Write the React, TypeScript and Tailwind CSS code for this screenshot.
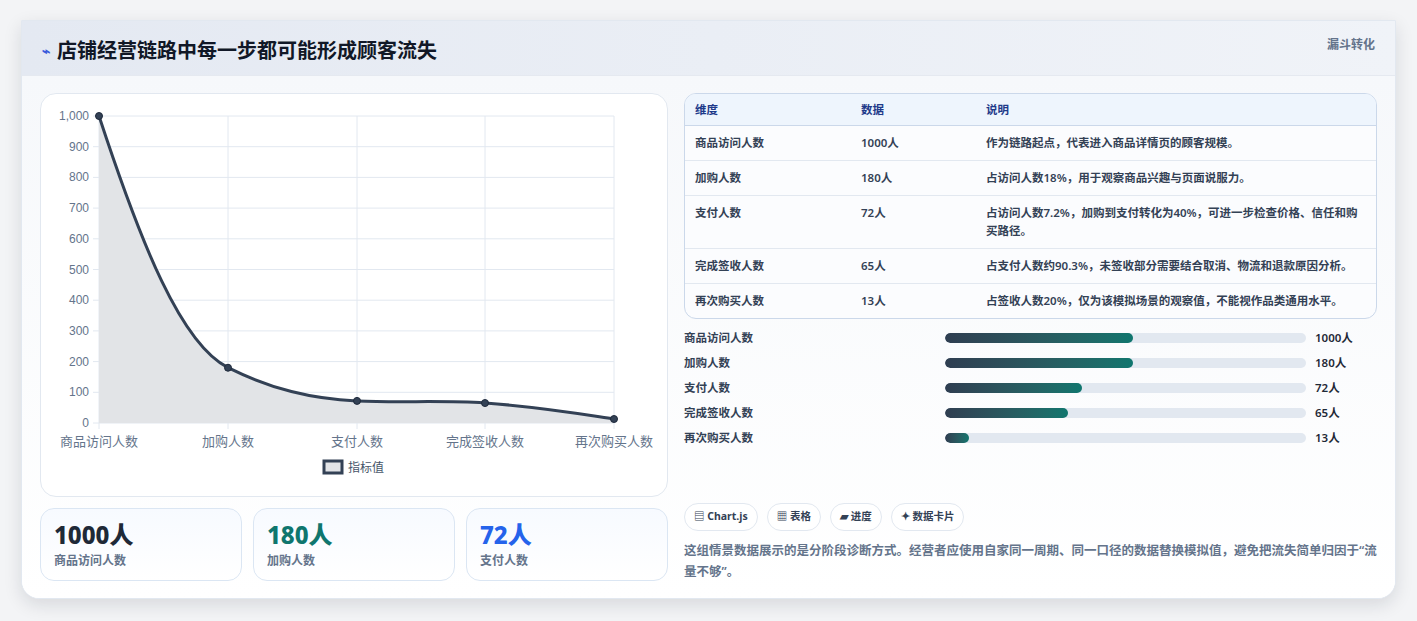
import React from "react";

const rows = [
  ["商品访问人数", "1000人", "作为链路起点，代表进入商品详情页的顾客规模。"],
  ["加购人数", "180人", "占访问人数18%，用于观察商品兴趣与页面说服力。"],
  ["支付人数", "72人", "占访问人数7.2%，加购到支付转化为40%，可进一步检查价格、信任和购买路径。"],
  ["完成签收人数", "65人", "占支付人数约90.3%，未签收部分需要结合取消、物流和退款原因分析。"],
  ["再次购买人数", "13人", "占签收人数20%，仅为该模拟场景的观察值，不能视作品类通用水平。"],
];
const bars = [
  ["商品访问人数", 52, "1000人"],
  ["加购人数", 52, "180人"],
  ["支付人数", 38, "72人"],
  ["完成签收人数", 34, "65人"],
  ["再次购买人数", 6.6, "13人"],
] as const;

function Chart() {
  const xs = [58, 187, 316, 444, 573];
  const y = (v: number) => 329 - v * 0.307;
  const vals = [1000, 180, 72, 65, 13];
  const cats = ["商品访问人数", "加购人数", "支付人数", "完成签收人数", "再次购买人数"];
  const line =
    "M58,22 C100,150 140,250 187,273.7 C230,295 270,305 316,306.9 C360,309 400,306 444,309 C500,313 540,320 573,325";
  return (
    <svg width="627" height="401" className="block" style={{ fontFamily: "'Liberation Sans','Noto Sans CJK SC',sans-serif" }}>
      {[0, 1, 2, 3, 4, 5, 6, 7, 8, 9, 10].map((i) => (
        <g key={i}>
          <line x1={52} x2={573} y1={y(i * 100)} y2={y(i * 100)} stroke="#e2e8f0" />
          <text x={48} y={y(i * 100) + 4} textAnchor="end" fontSize="12" fill="#64748b">
            {i === 10 ? "1,000" : i * 100}
          </text>
        </g>
      ))}
      {xs.map((x, i) => (
        <g key={i}>
          <line x1={x} x2={x} y1={22} y2={335} stroke="#e2e8f0" />
          <text x={x} y={352} textAnchor="middle" fontSize="13" fill="#64748b">{cats[i]}</text>
        </g>
      ))}
      <path d={line + " L573,329 L58,329 Z"} fill="#e2e4e7" />
      <path d={line} fill="none" stroke="#334155" strokeWidth="3" />
      {xs.map((x, i) => (
        <circle key={i} cx={x} cy={y(vals[i])} r="3.5" fill="#334155" stroke="#1e293b" strokeWidth="1" />
      ))}
      <rect x={283} y={367} width={18} height={12} fill="#e2e4e7" stroke="#334155" strokeWidth="3" />
      <text x={307} y={378} fontSize="12" fill="#475569">指标值</text>
    </svg>
  );
}

export default function App() {
  return (
    <div className="min-h-[621px] bg-[#f3f4f6] pt-[20px] pl-[21px] pr-[21px]" style={{ fontFamily: "'Noto Sans','Noto Sans CJK SC',sans-serif" }}>
      <div className="w-[1375px] h-[579px] rounded-b-[18px] bg-white border border-[#e2e8f0] shadow-[0_6px_18px_rgba(15,23,42,0.12)] overflow-hidden flex flex-col">
        <div className="h-[55px] bg-gradient-to-r from-[#e4e9f2] to-[#f0f3f8] flex items-start justify-between px-[20px] border-b border-[#e5e9f0]">
          <div className="flex items-center gap-[7px] mt-[14px]">
            <span className="text-[#3b5bdb] text-[14px] font-bold">⌁</span>
            <span className="text-[20px] font-bold text-[#111827]" style={{ fontFamily: "'Noto Sans CJK SC',sans-serif" }}>店铺经营链路中每一步都可能形成顾客流失</span>
          </div>
          <span className="mt-[15px] text-[12px] font-bold text-[#64748b]">漏斗转化</span>
        </div>
        <div className="flex-1 bg-gradient-to-b from-[#f6f8fb] to-white flex gap-[16px] px-[18px] pt-[17px]">
          <div className="w-[628px] flex flex-col gap-[11px]">
            <div className="h-[404px] rounded-[16px] border border-[#e2e8f0] bg-white overflow-hidden">
              <Chart />
            </div>
            <div className="grid grid-cols-3 gap-[11px]">
              {[["1000人", "text-[#1f2937]", "商品访问人数"], ["180人", "text-[#0f766e]", "加购人数"], ["72人", "text-[#2563eb]", "支付人数"]].map(([n, c, l]) => (
                <div key={l} className="h-[73px] rounded-[14px] border border-[#dbe6f3] bg-gradient-to-b from-[#f7faff] to-white px-[13px] pt-[10px]">
                  <div className={`text-[24px] leading-[32px] font-extrabold ${c}`}>{n}</div>
                  <div className="text-[12px] text-[#64748b] font-semibold mt-[1px]">{l}</div>
                </div>
              ))}
            </div>
          </div>
          <div className="w-[695px] flex flex-col">
            <div className="rounded-[12px] border border-[#cbd8ea] overflow-hidden bg-[#fbfcfe] text-[11.5px] font-semibold text-[#334155]">
              <div className="flex h-[32px] items-center bg-[#eef5fd] text-[#1e3a8a] border-b border-[#cbd8ea]">
                <div className="w-[176px] pl-[10px]">维度</div>
                <div className="w-[125px]">数据</div>
                <div className="flex-1">说明</div>
              </div>
              {rows.map((r, i) => (
                <div key={i} className={`flex py-[8px] leading-[18px] ${i < 4 ? "border-b border-[#e2e8f0]" : ""}`}>
                  <div className="w-[176px] pl-[10px]">{r[0]}</div>
                  <div className="w-[125px]">{r[1]}</div>
                  <div className="flex-1 pr-[8px]">{r[2]}</div>
                </div>
              ))}
            </div>
            <div className="mt-[10px] flex flex-col gap-[7px] text-[11.5px] font-semibold text-[#334155]">
              {bars.map(([l, w, v]) => (
                <div key={l} className="flex items-center h-[18px]">
                  <div className="w-[261px]">{l}</div>
                  <div className="w-[361px] h-[10px] rounded-full bg-[#e2e8f0] overflow-hidden">
                    <div className="h-full rounded-full bg-gradient-to-r from-[#2f3e51] to-[#0f766e]" style={{ width: `${w}%` }} />
                  </div>
                  <div className="ml-[9px] text-[#1f2937]">{v}</div>
                </div>
              ))}
            </div>
            <div className="mt-[56px] flex gap-[9px]">
              {["▤ Chart.js", "▦ 表格", "▰ 进度", "✦ 数据卡片"].map((t) => (
                <span key={t} className="h-[28px] px-[9px] rounded-full border border-[#e2e8f0] bg-white text-[10.5px] font-bold text-[#334155] flex items-center">{t}</span>
              ))}
            </div>
            <p className="mt-[9px] text-[12.5px] leading-[21px] font-semibold text-[#64748b]">
              这组情景数据展示的是分阶段诊断方式。经营者应使用自家同一周期、同一口径的数据替换模拟值，避免把流失简单归因于“流量不够”。
            </p>
          </div>
        </div>
      </div>
    </div>
  );
}
